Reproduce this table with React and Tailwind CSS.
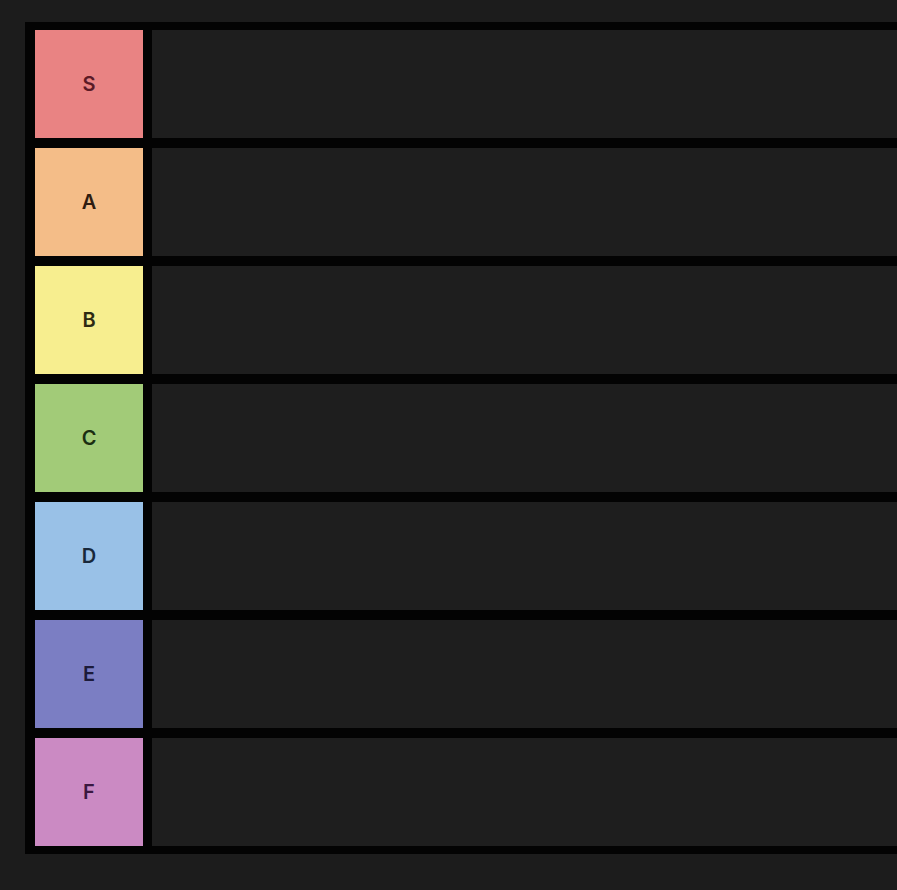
import React from 'react';

// Tier rows, top to bottom
const tiers = [
  { label: 'S', bg: 'bg-[#e98383]', text: 'text-[#5a1a26]' },
  { label: 'A', bg: 'bg-[#f4bd88]', text: 'text-[#2e1c10]' },
  { label: 'B', bg: 'bg-[#f7ee8f]', text: 'text-[#2e2a12]' },
  { label: 'C', bg: 'bg-[#a2cb78]', text: 'text-[#1a2e12]' },
  { label: 'D', bg: 'bg-[#99c1e7]', text: 'text-[#18283a]' },
  { label: 'E', bg: 'bg-[#7b7ec3]', text: 'text-[#1c1b3a]' },
  { label: 'F', bg: 'bg-[#cb8ac3]', text: 'text-[#3a1840]' },
];

export default function App() {
  return (
    <div className="w-[897px] h-[890px] overflow-hidden bg-[#1c1c1c] pl-[25px] pt-[22px] font-['Inter','Liberation_Sans',sans-serif]">
      <div className="w-[900px] bg-[#030303] pl-[10px] pr-[9px] py-[8px] flex flex-col gap-[10px]">
        {tiers.map(({ label, bg, text }) => (
          <div key={label} className="flex h-[108px] gap-[9px]">
            <div className={`w-[108px] shrink-0 flex items-center justify-center ${bg}`}>
              <span className={`text-[20px] font-semibold ${text}`}>{label}</span>
            </div>
            <div className="flex-1 bg-[#1e1e1e]" />
          </div>
        ))}
      </div>
    </div>
  );
}
